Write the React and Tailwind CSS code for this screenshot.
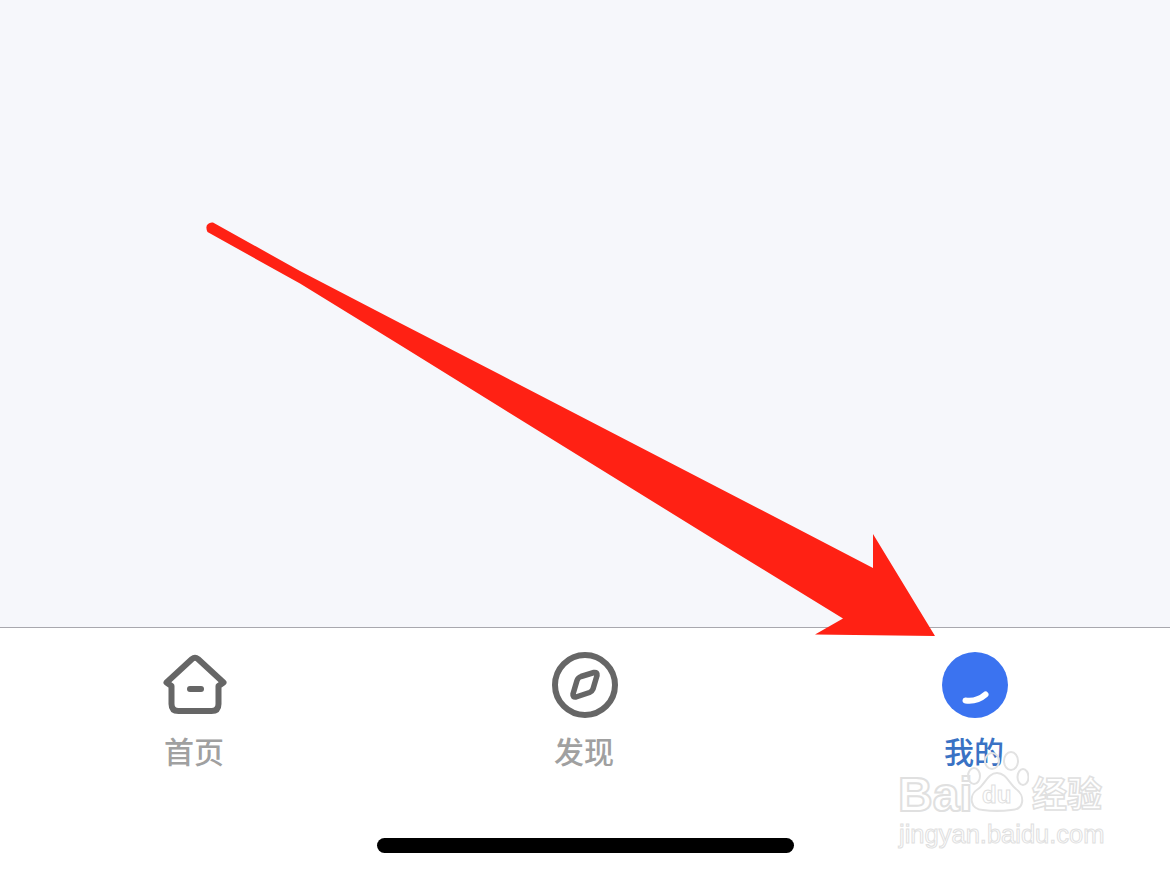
export default function App() {
  return (
    <div className="relative w-[1170px] h-[873px] overflow-hidden flex flex-col bg-white font-['Liberation_Sans','Noto_Sans_CJK_SC',sans-serif]">
      <div className="h-[627px] bg-[#f6f7fb] shrink-0" />
      <div className="h-px bg-[#a8a8ae] shrink-0" />
      <div className="grid grid-cols-3 pt-[24px]">
        <Tab label="首页" color="text-[#a0a0a0]">
          <svg width="66" height="66" viewBox="0 0 66 66" fill="none" stroke="#666666" strokeWidth="6" strokeLinejoin="round" strokeLinecap="round">
            <path d="M4.5 30.5 L30 7 Q33 4.5 36 7 L61.5 30.5 L56.5 34 L56.5 52 Q56.5 59 49.5 59 L16.5 59 Q9.5 59 9.5 52 L9.5 34 Z" />
            <path d="M28 37 H39" />
          </svg>
        </Tab>
        <Tab label="发现" color="text-[#a0a0a0]">
          <svg width="66" height="66" viewBox="0 0 66 66" fill="none" stroke="#666666">
            <circle cx="33" cy="33" r="30" strokeWidth="6" />
            <path d="M29 24.5 L42 20.5 Q45.5 20 45 23.5 L41 37 Q40 39.5 37.5 40.5 L24 45 Q20.5 45.5 21 42 L25 28.5 Q26 25.5 29 24.5 Z" strokeWidth="5.5" strokeLinejoin="round" />
          </svg>
        </Tab>
        <Tab label="我的" color="text-[#3a72c4]">
          <svg width="66" height="66" viewBox="0 0 66 66" fill="none">
            <circle cx="33" cy="33" r="33" fill="#3b73f0" />
            <path d="M23.5 48.5 Q35 50 43.5 42.5" stroke="#ffffff" strokeWidth="6" strokeLinecap="round" />
          </svg>
        </Tab>
      </div>
      <div className="mt-auto mb-[20px] mx-auto w-[417px] h-[15px] rounded-full bg-black" />

      {/* annotation arrow */}
      <svg className="absolute left-0 top-0 pointer-events-none" width="1170" height="873" viewBox="0 0 1170 873">
        <path d="M213 222.5 L300 271 L400 323 L500 374.5 L800 530 L873 568 L873 534 L935 636 L815 634.5 L843 618.5 L715 540 L500 407 L400 345 L300 283.5 L207.5 232 Q205 226.5 208 224 Q210 222 213 222.5 Z" fill="#ff2114" />
      </svg>

      {/* watermark */}
      <div className="absolute left-[897px] top-[740px] w-[215px] h-[115px] pointer-events-none">
        <span className="absolute left-[1px] top-[28px] text-[48px] leading-[54px] font-bold text-white [-webkit-text-stroke:2px_#e0e0e0]">Bai</span>
        <svg className="absolute left-[68px] top-[5px]" width="64" height="72" viewBox="0 0 64 72" fill="none" stroke="#e2e2e2" strokeWidth="2">
          <ellipse cx="9" cy="31" rx="6" ry="8" />
          <ellipse cx="27" cy="16" rx="7" ry="8" />
          <ellipse cx="46" cy="16" rx="7" ry="9" />
          <ellipse cx="58" cy="32" rx="5.5" ry="8" />
          <path d="M32 28 C41 28 44 38 51 44 C60 50 60 65 46 65 C38 66 26 66 18 65 C5 65 3 50 13 44 C20 39 23 28 32 28 Z" />
        </svg>
        <span className="absolute left-[85px] top-[38px] text-[24px] leading-[34px] font-bold text-white [-webkit-text-stroke:1px_#e0e0e0]">du</span>
        <span className="absolute left-[135px] top-[34px] text-[35px] leading-[42px] font-bold text-white [-webkit-text-stroke:1.5px_#e0e0e0]">经验</span>
        <span className="absolute left-[2px] top-[79px] text-[25.5px] leading-[30px] text-white [-webkit-text-stroke:1px_#e0e0e0]">jingyan.baidu.com</span>
      </div>
    </div>
  );
}

function Tab({ label, color, children }) {
  return (
    <div className="flex flex-col items-center">
      {children}
      <span className={`mt-[17px] pr-[2px] text-[30px] leading-[36px] font-medium ${color}`}>{label}</span>
    </div>
  );
}
